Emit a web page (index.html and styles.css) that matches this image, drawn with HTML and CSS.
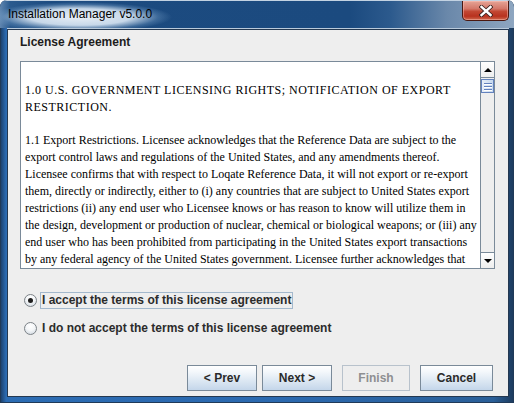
FILE: index.html
```html
<!DOCTYPE html>
<html lang="en">
<head>
<meta charset="utf-8">
<title>Installation Manager v5.0.0</title>
<link rel="stylesheet" href="styles.css">
</head>
<body>
<div class="window">
  <div class="titlebar">
    <span class="title">Installation Manager v5.0.0</span>
    <button class="close" aria-label="Close">
      <svg width="14" height="12" viewBox="0 0 14 12">
        <path d="M2.5 2 L11.5 10 M11.5 2 L2.5 10" stroke="#3a2320" stroke-width="4.2" stroke-linecap="square" fill="none"/>
        <path d="M2.5 2 L11.5 10 M11.5 2 L2.5 10" stroke="#ffffff" stroke-width="2.4" stroke-linecap="square" fill="none"/>
      </svg>
    </button>
  </div>
  <div class="frame-body">
    <div class="client">
      <h1 class="heading">License Agreement</h1>
      <div class="license">
        <div class="license-text">
          <p class="notice">1.0 U.S. GOVERNMENT LICENSING RIGHTS; NOTIFICATION OF EXPORT RESTRICTION.</p>
          <p>1.1 Export Restrictions. Licensee acknowledges that the Reference Data are subject to the export control laws and regulations of the United States, and any amendments thereof. Licensee confirms that with respect to Loqate Reference Data, it will not export or re-export them, directly or indirectly, either to (i) any countries that are subject to United States export restrictions (ii) any end user who Licensee knows or has reason to know will utilize them in the design, development or production of nuclear, chemical or biological weapons; or (iii) any end user who has been prohibited from participating in the United States export transactions by any federal agency of the United States government. Licensee further acknowledges that the Reference Data may include technical data subject to export and re-export restrictions imposed by US law.</p>
        </div>
        <div class="scrollbar">
          <div class="sb-btn sb-up"><span class="tri-up"></span></div>
          <div class="sb-thumb"><span></span><span></span><span></span></div>
          <div class="sb-track"></div>
          <div class="sb-btn sb-down"><span class="tri-down"></span></div>
        </div>
      </div>
      <div class="options">
        <label class="option">
          <span class="radio checked"></span>
          <span class="option-label focused">I accept the terms of this license agreement</span>
        </label>
        <label class="option">
          <span class="radio"></span>
          <span class="option-label">I do not accept the terms of this license agreement</span>
        </label>
      </div>
      <div class="buttons">
        <div class="nav-pair">
          <button class="btn btn-prev">&lt; Prev</button>
          <button class="btn btn-next">Next &gt;</button>
        </div>
        <button class="btn btn-finish" disabled>Finish</button>
        <button class="btn btn-cancel">Cancel</button>
      </div>
    </div>
  </div>
</div>
</body>
</html>
```

FILE: styles.css
```css
html, body {
  margin: 0;
  padding: 0;
  background: #ffffff;
}

body {
  font-family: "Liberation Sans", Arial, sans-serif;
  color: #000000;
}

.window {
  width: 514px;
  height: 403px;
  display: flex;
  flex-direction: column;
  border-radius: 7px 7px 0 0;
  overflow: hidden;
  background: linear-gradient(to right, #1a3b63 0, #2c6cb3 1.2%, #2b69af 55%, #2a5f98 96%, #1c3a5c 100%);
  box-shadow: inset 0 0 0 1px #203a58;
}

.titlebar {
  height: 28px;
  flex: none;
  display: flex;
  align-items: flex-start;
  justify-content: space-between;
  background:
    radial-gradient(ellipse 92px 15px at 80px 16px, rgba(236, 242, 248, 0.98) 0, rgba(214, 228, 242, 0.92) 55%, rgba(120, 160, 200, 0.35) 85%, rgba(30, 76, 128, 0) 100%),
    linear-gradient(to right, #5f86b0 0, #2a5a8e 2%, #1c4b80 10%, #1b4a7f 68%, #2c5a8d 76%, #6a88aa 87%, #8ea6c0 100%);
  border-top: 1px solid #c2d2e2;
  box-sizing: border-box;
}

.title {
  margin: 6px 0 0 8px;
  font-size: 12px;
  line-height: 15px;
  color: #000000;
  white-space: nowrap;
}

.close {
  width: 47px;
  height: 20px;
  margin: 0 5px 0 0;
  padding: 0;
  border: 1px solid #4a1810;
  border-top: none;
  border-radius: 0 0 5px 5px;
  background: linear-gradient(to bottom, #e6a597 0, #d4786a 40%, #c24733 55%, #b8321f 80%, #cf6a4f 100%);
  box-shadow: inset 0 0 0 1px rgba(255, 200, 190, 0.45);
  display: flex;
  align-items: center;
  justify-content: center;
}

.frame-body {
  flex: 1;
  padding: 1px 5px 6px 7px;
  display: flex;
}

.client {
  flex: 1;
  box-sizing: border-box;
  border: 1px solid #243850;
  box-shadow: 0 -1px 0 #b9cadb;
  background: #eeeeee;
  padding: 5px 13px 5px 12px;
  display: flex;
  flex-direction: column;
}

.heading {
  margin: 0 0 11px;
  font-size: 12px;
  line-height: 15px;
  font-weight: bold;
  color: #1c1c1c;
}

.license {
  height: 208px;
  box-sizing: border-box;
  border: 1px solid #7a8a99;
  background: #ffffff;
  display: flex;
  flex: none;
}

.license-text {
  flex: 1;
  overflow: hidden;
  padding: 20px 2px 0 4px;
  font-family: "Liberation Serif", "Times New Roman", serif;
  font-size: 12px;
  line-height: 17px;
  color: #000000;
}

.license-text p {
  margin: 0 0 16px;
}

.license-text .notice {
  letter-spacing: 0.5px;
}

.scrollbar {
  width: 14px;
  box-sizing: border-box;
  border-left: 1px solid #7a8a99;
  background: #eeeeee;
  display: flex;
  flex-direction: column;
}

.sb-btn {
  height: 16px;
  flex: none;
  box-sizing: border-box;
  background: linear-gradient(to bottom, #ffffff, #eeeeee);
  display: flex;
  align-items: center;
  justify-content: center;
}

.sb-up {
  border-bottom: 1px solid #7a8a99;
}

.sb-down {
  border-top: 1px solid #7a8a99;
}

.tri-up {
  width: 0;
  height: 0;
  border-left: 4px solid transparent;
  border-right: 4px solid transparent;
  border-bottom: 4px solid #000000;
}

.tri-down {
  width: 0;
  height: 0;
  border-left: 4px solid transparent;
  border-right: 4px solid transparent;
  border-top: 4px solid #000000;
}

.sb-thumb {
  height: 14px;
  flex: none;
  margin-top: 1px;
  box-sizing: border-box;
  border: 1px solid #6382be;
  background: linear-gradient(to right, #e6eef8, #c6d8ee);
  display: flex;
  flex-direction: column;
  align-items: center;
  justify-content: center;
  gap: 2px;
}

.sb-thumb span {
  width: 8px;
  height: 1px;
  background: #6382be;
  box-shadow: 0 1px 0 #ffffff;
}

.sb-track {
  flex: 1;
  background: #eeeeee;
}

.options {
  margin-top: 23px;
  padding-left: 4px;
  display: flex;
  flex-direction: column;
  gap: 11px;
}

.option {
  display: flex;
  align-items: center;
  gap: 3px;
  height: 17px;
}

.radio {
  width: 13px;
  height: 13px;
  box-sizing: border-box;
  border-radius: 50%;
  border: 1px solid #7c8287;
  background: radial-gradient(circle at 50% 30%, #ffffff 0, #f4f6f8 45%, #c9d2db 100%);
  display: flex;
  align-items: center;
  justify-content: center;
}

.radio.checked::after {
  content: "";
  width: 5px;
  height: 5px;
  border-radius: 50%;
  background: #1e1e1e;
}

.option-label {
  font-size: 12px;
  line-height: 15px;
  font-weight: bold;
  color: #2b2b2b;
  padding: 0 1px;
  border: 1px solid transparent;
}

.option-label.focused {
  border-color: #a3b8cc;
}

.buttons {
  margin-top: auto;
  padding-right: 2px;
  display: flex;
  justify-content: flex-end;
  gap: 10px;
}

.nav-pair {
  display: flex;
  gap: 5px;
}

.btn {
  height: 26px;
  box-sizing: border-box;
  padding: 0;
  border: 1px solid #7a8a99;
  background: linear-gradient(to bottom, #ffffff 0, #f3f7fb 25%, #dde8f3 60%, #c4d6ea 100%);
  font-family: "Liberation Sans", Arial, sans-serif;
  font-size: 12px;
  font-weight: bold;
  color: #2a2a2a;
}

.btn-prev,
.btn-next {
  width: 70px;
}

.btn-finish {
  width: 68px;
  border-color: #b8c2cc;
  background: #eeeeee;
  color: #8e8f91;
}

.btn-cancel {
  width: 73px;
}
```
